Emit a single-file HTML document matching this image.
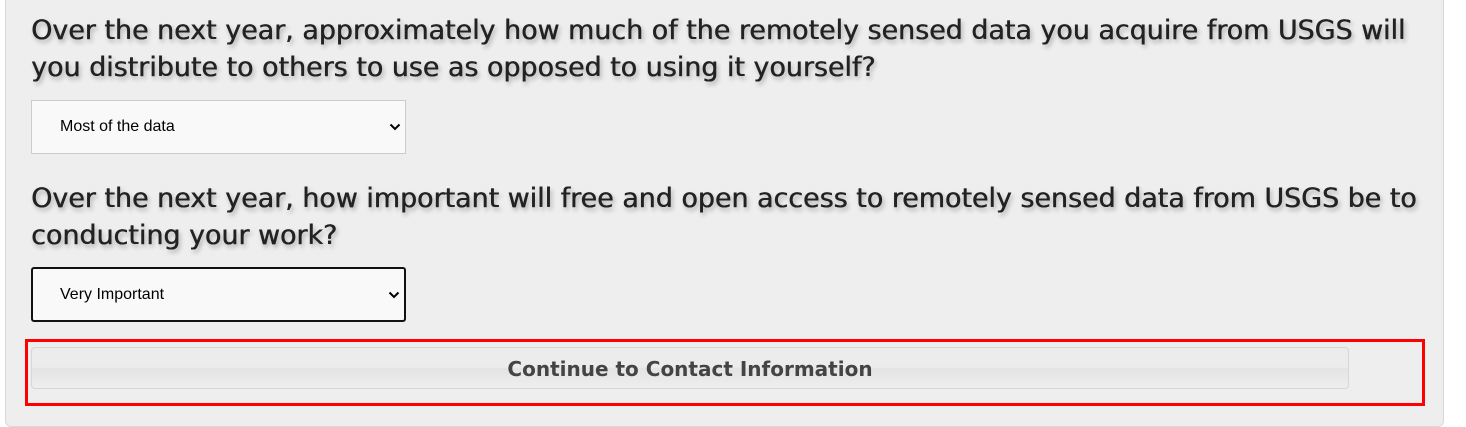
<!DOCTYPE html>
<html><head><style>
body{margin:0;background:#fff;width:1466px;height:427px;overflow:hidden;font-family:"Liberation Sans",sans-serif;}
.panel{position:absolute;left:5px;top:-10px;width:1437px;height:435px;background:#eeeeee;border:1px solid #d8d8d8;border-radius:0 0 6px 6px;}
h2{position:absolute;left:31px;margin:0;font-family:"DejaVu Sans",sans-serif;font-size:26.9px;font-weight:normal;color:#222;line-height:37px;text-shadow:0.5px 0 0 #222,2px 3px 5px rgba(0,0,0,.3);width:1395px;white-space:nowrap;}
.sel{position:absolute;left:31px;width:375px;background:#f9f9f9;box-sizing:border-box;font-size:16px;color:#000;}
.sel span{position:absolute;left:28px;top:50%;transform:translateY(-50%);}
.sel svg{position:absolute;right:4px;top:50%;margin-top:-4px;}
.red{position:absolute;left:25px;top:339px;width:1400px;height:67px;box-sizing:border-box;border:3px solid #f00;}
.btn{position:absolute;left:31px;top:347px;width:1318px;height:42px;box-sizing:border-box;border:1px solid #d6d6d6;border-radius:4px;background:linear-gradient(#ececec 0,#ececec 48%,#e4e4e4 52%,#eeeeee 100%);text-align:center;line-height:42px;font-family:"DejaVu Sans",sans-serif;font-weight:bold;font-size:20px;color:#444;}
</style></head><body>
<div class="panel"></div>
<h2 style="top:12px">Over the next year, approximately how much of the remotely sensed data you acquire from USGS will<br>you distribute to others to use as opposed to using it yourself?</h2>
<div class="sel" style="top:100px;height:54px;border:1px solid #ccc;"><span>Most of the data</span><svg width="12" height="8" viewBox="0 0 12 8"><path d="M1.5 1.5 L6 6 L10.5 1.5" stroke="#000" stroke-width="2" fill="none"/></svg></div>
<h2 style="top:180px">Over the next year, how important will free and open access to remotely sensed data from USGS be to<br>conducting your work?</h2>
<div class="sel" style="top:267px;height:55px;border:2px solid #111;border-radius:3px;"><span style="left:27px">Very Important</span><svg width="12" height="8" viewBox="0 0 12 8"><path d="M1.5 1.5 L6 6 L10.5 1.5" stroke="#000" stroke-width="2" fill="none"/></svg></div>
<div class="red"></div>
<div class="btn">Continue to Contact Information</div>
</body></html>
